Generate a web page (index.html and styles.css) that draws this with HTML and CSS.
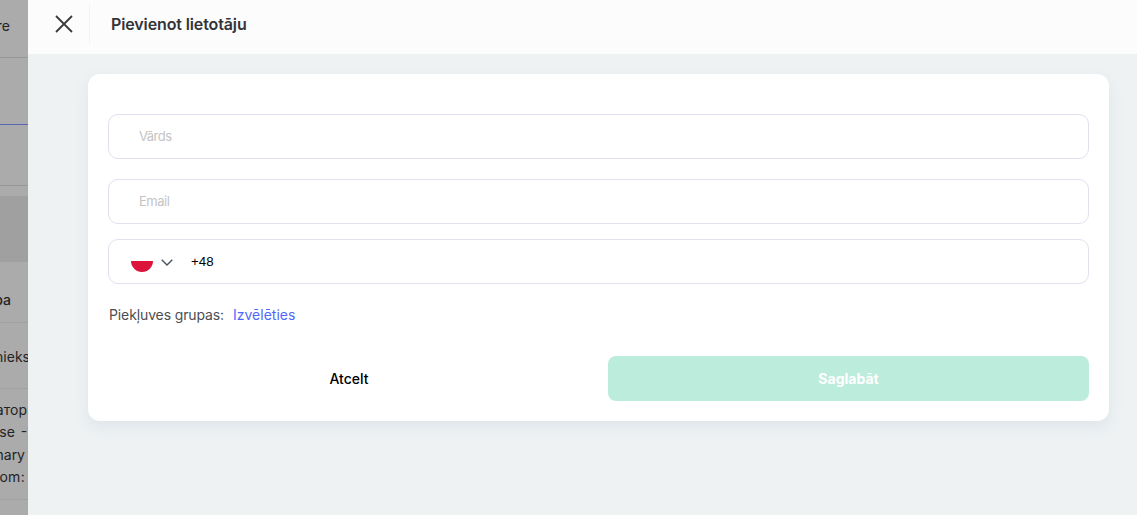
FILE: index.html
```html
<!DOCTYPE html>
<html lang="lv">
<head>
<meta charset="utf-8">
<title>Pievienot lietotāju</title>
<link rel="stylesheet" href="styles.css">
</head>
<body>
<div class="page">
  <aside class="behind">
    <div class="row row-top"><span>Store</span></div>
    <div class="row row-tab"></div>
    <div class="row row-sub"></div>
    <div class="row row-band"></div>
    <div class="row row-group"><span>Grupa</span></div>
    <div class="row row-worker"><span>Darbinieks</span></div>
    <div class="row row-info">
      <span class="info-a">Администратор</span>
      <span class="info-b">Enterprise -1</span>
      <span class="info-c">Primary</span>
      <span class="info-d">Telecom:</span>
    </div>
  </aside>
  <main class="panel">
    <header class="topbar">
      <button class="close" type="button" aria-label="Aizvērt">
        <svg width="18" height="18" viewBox="0 0 18 18" fill="none" stroke="#3a3a3c" stroke-width="1.8"><path d="M1 1l16 16M17 1L1 17"/></svg>
      </button>
      <h1 class="title">Pievienot lietotāju</h1>
    </header>
    <div class="content">
      <form class="card">
        <div class="field field-name"><span class="placeholder">Vārds</span></div>
        <div class="field field-email"><span class="placeholder">Email</span></div>
        <div class="field field-phone">
          <svg class="flag" width="22" height="11" viewBox="0 0 22 11"><path d="M0 0h22a11 11 0 0 1-22 0z" fill="#dc143c"/></svg>
          <svg class="chevron" width="12" height="7" viewBox="0 0 12 7" fill="none" stroke="#4a5160" stroke-width="1.4"><path d="M.7.7L6 6l5.3-5.3"/></svg>
          <span class="code">+48</span>
        </div>
        <div class="groups"><span class="groups-label">Piekļuves grupas:</span><a class="link">Izvēlēties</a></div>
        <div class="actions">
          <button class="btn btn-cancel" type="button">Atcelt</button>
          <button class="btn btn-save" type="button">Saglabāt</button>
        </div>
      </form>
    </div>
  </main>
</div>
</body>
</html>
```
FILE: styles.css
```css
* { box-sizing: border-box; }
html, body { margin: 0; height: 100%; overflow: hidden; }
body { font-family: Inter, "Liberation Sans", sans-serif; }
.page { display: flex; width: 1137px; height: 515px; }

.behind { flex: 0 0 28px; overflow: hidden; background: #ababab; color: #232323; font-size: 14px; display: flex; flex-direction: column; }
.row { display: flex; justify-content: flex-end; white-space: nowrap; flex: none; border-bottom: 1px solid #a1a1a1; }
.row-top { height: 58px; padding: 17px 18px 0 0; line-height: 17px; border-bottom-color: #979797; }
.row-tab { height: 67px; border-bottom-color: #5668b4; }
.row-sub { height: 61px; border-bottom-color: #979797; }
.row-band { height: 66px; margin-top: 10px; border: 0; background: #a0a0a0; }
.row-group { height: 61px; padding: 29px 17px 0 0; line-height: 17px; font-weight: 500; }
.row-worker { height: 66px; padding: 25px 0 0 0; line-height: 17px; }
.row-worker span { margin-right: -2px; }
.row-info { height: 111px; flex-direction: column; align-items: flex-end; justify-content: flex-start; padding-top: 10px; line-height: 22.3px; }
.row-info span { display: block; }
.info-a { margin-right: 1px; }
.info-b { margin-right: -5px; word-spacing: 2px; }
.info-c { margin-right: 3px; }
.info-d { margin-right: 3px; letter-spacing: .3px; }

.panel { flex: 1; display: flex; flex-direction: column; background: #eef2f3; min-width: 0; }
.topbar { flex: 0 0 54px; display: flex; align-items: flex-start; padding: 4px 0 0 27px; background: #fcfcfd; }
.close { width: 35px; height: 40px; padding: 0; margin: 0; background: none; border: 0; border-right: 1px solid #f1f2f4; display: flex; align-items: center; }
.title { margin: 0 0 0 21px; font-size: 16px; line-height: 41px; font-weight: 600; color: #333338; letter-spacing: -.12px; }
.content { padding: 20px 28px 0 60px; }

.card { background: #fff; border-radius: 12px; padding: 40px 20px 20px; box-shadow: 0 6px 14px rgba(190, 200, 215, .3); }
.field { height: 45px; border: 1px solid #e0e0ef; border-radius: 10px; display: flex; align-items: center; font-size: 13px; }
.field-email { margin-top: 20px; }
.field-phone { margin-top: 15px; padding-left: 22px; }
.placeholder { margin: -2px 0 0 30px; color: #c4c4c4; letter-spacing: -.5px; }
.flag { margin-top: 9px; }
.chevron { margin: 1px 0 0 8px; }
.code { margin-left: 18px; color: #000; font: 13.33px "Liberation Sans", sans-serif; }
.groups { margin-top: 21px; height: 20px; line-height: 20px; font-size: 14px; color: #4e4e52; padding-left: 1px; display: flex; }
.groups-label { letter-spacing: -.12px; }
.link { margin-left: 9px; color: #4f67fb; }
.actions { margin-top: 31px; display: grid; grid-template-columns: 480px 481px; gap: 20px; }
.btn { height: 45px; border: 0; border-radius: 8px; font: 500 14px Inter, "Liberation Sans", sans-serif; background: none; color: #000; }
.btn-cancel { padding-left: 8px; }
.btn-save { background: #bcecdb; color: #fff; font-weight: 700; }
```
